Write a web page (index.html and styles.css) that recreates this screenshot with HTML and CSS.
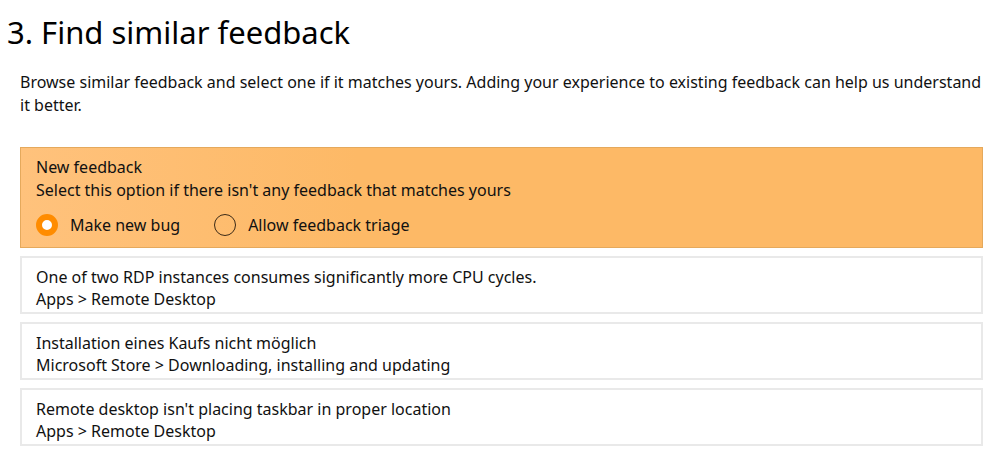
FILE: index.html
```html
<!DOCTYPE html>
<html lang="en">
<head>
<meta charset="utf-8">
<title>Find similar feedback</title>
<link rel="stylesheet" href="styles.css">
</head>
<body>
<main class="page">
  <h1 class="title">3. Find similar feedback</h1>
  <p class="intro">Browse similar feedback and select one if it matches yours. Adding your experience to existing feedback can help us understand it better.</p>
  <ul class="list">
    <li class="card card--selected">
      <div class="line">New feedback</div>
      <div class="line">Select this option if there isn't any feedback that matches yours</div>
      <div class="radios">
        <label class="radio">
          <span class="radio__dot radio__dot--on"></span>
          <span>Make new bug</span>
        </label>
        <label class="radio">
          <span class="radio__dot"></span>
          <span>Allow feedback triage</span>
        </label>
      </div>
    </li>
    <li class="card">
      <div class="line">One of two RDP instances consumes significantly more CPU cycles.</div>
      <div class="line">Apps &gt; Remote Desktop</div>
    </li>
    <li class="card">
      <div class="line">Installation eines Kaufs nicht möglich</div>
      <div class="line">Microsoft Store &gt; Downloading, installing and updating</div>
    </li>
    <li class="card">
      <div class="line">Remote desktop isn't placing taskbar in proper location</div>
      <div class="line">Apps &gt; Remote Desktop</div>
    </li>
  </ul>
</main>
</body>
</html>
```
FILE: styles.css
```css
* { box-sizing: border-box; }
html, body { margin: 0; padding: 0; background: #fff; }
body {
  font-family: "Noto Sans", "Open Sans", sans-serif;
  color: #111;
  font-size: 16px;
}
.page {
  width: 1008px;
  padding: 0 25px 0 20px;
}
.title {
  margin: 0 0 0 -13px;
  padding-top: 10px;
  font-weight: 400;
  font-size: 31px;
  line-height: 44px;
  color: #000;
}
.intro {
  margin: 17px 0 0 0;
  line-height: 23px;
  font-size: 16px;
}
.list {
  list-style: none;
  margin: 30px 0 0 0;
  padding: 0;
  display: flex;
  flex-direction: column;
  gap: 8px;
}
.card {
  border: 2px solid #e9e9e9;
  padding: 8px 14px 2px 14px;
  background: #fff;
}
.line {
  line-height: 22px;
  white-space: nowrap;
}
.card--selected {
  border: 1px solid #e5a95c;
  background: linear-gradient(90deg, #ffc27c 0%, #fdb966 35%, #fdb966 100%);
  padding: 8px 15px 10px 15px;
}
.card--selected .line {
  line-height: 23px;
}
.radios {
  display: flex;
  gap: 34px;
  margin-top: 11px;
  height: 24px;
  align-items: center;
}
.radio {
  display: flex;
  align-items: center;
  gap: 12px;
  font-size: 16px;
}
.radio__dot {
  width: 22px;
  height: 22px;
  border-radius: 50%;
  border: 1.5px solid #3b2a17;
  flex: none;
}
.radio__dot--on {
  border: 6px solid #ff8c00;
  background: #fff;
}
```
